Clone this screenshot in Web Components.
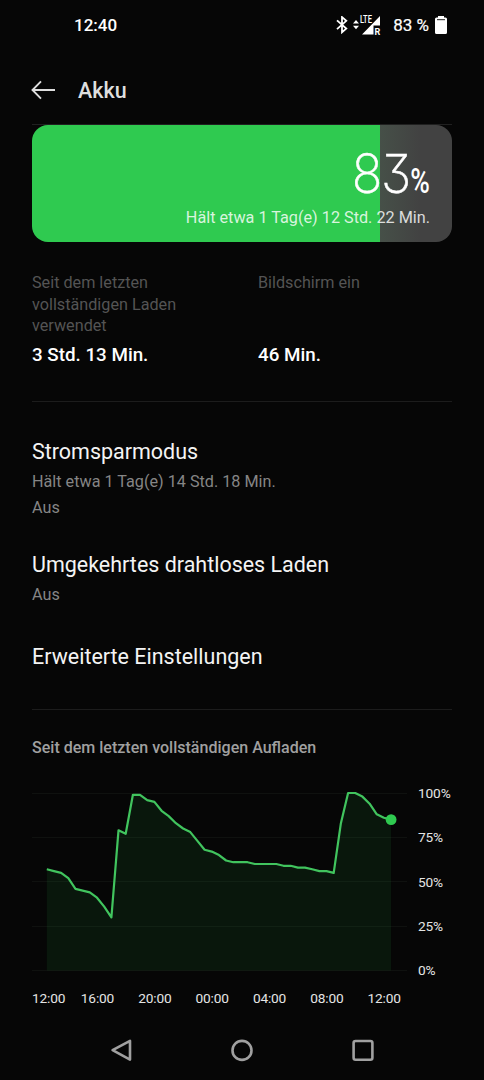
<!DOCTYPE html>
<html lang="de">
<head>
<meta charset="utf-8">
<title>Akku</title>
<style>
html,body{margin:0;background:#060606}
body{width:484px;height:1080px;overflow:hidden;font-family:Roboto,sans-serif;color:#fff}
</style>
</head>
<body>
<battery-screen></battery-screen>
<script>
function define(name, html, setup) {
  const template = document.createElement('template');
  template.innerHTML = html;
  customElements.define(name, class extends HTMLElement {
    constructor() {
      super();
      this.attachShadow({ mode: 'open' }).append(template.content.cloneNode(true));
    }
    connectedCallback() { if (setup) setup(this, this.shadowRoot); }
  });
}

define('status-bar', `
<style>
:host{display:flex;height:50px;box-sizing:border-box;padding:0 36px 0 74px;align-items:center;font-size:17px;font-weight:500;line-height:20px}
.time{flex:1}
svg{display:block;flex:none}
.bt{margin-right:5px}
.pct{margin:0 5px 0 12px;white-space:pre;font-weight:400;-webkit-text-stroke:.2px #fff}
</style>
<span class="time">12:40</span>
<svg class="bt" width="12" height="18" viewBox="0 0 12 18" fill="none" stroke="#fff" stroke-width="1.8"><path d="M1 4.300 10.300 12.600 6 16.300V1.100L10.300 4.800 1 13.100"/></svg>
<svg width="28" height="22" viewBox="0 0 28 22"><path d="M0 9.600 3 6.100 6 9.600zM0 11.700 3 15.200 6 11.700z" fill="#fff"/><path d="M27 2V11.5H20.5V20.5H9z" fill="#fff"/><text x="6.900" y="9" font-family="Roboto" font-size="10" font-weight="500" textLength="12" lengthAdjust="spacingAndGlyphs" fill="#fff" stroke="#060606" stroke-width=".8" paint-order="stroke">LTE</text><text x="21.6" y="20.5" font-family="Roboto" font-size="9" font-weight="700" fill="#fff">R</text></svg>
<span class="pct">83 %</span>
<svg width="14" height="20" viewBox="0 0 14 20"><path d="M4 1h6v1.500h1.5q1.5 0 1.500 1.500V17.500q0 1.500-1.500 1.500h-9Q1 19 1 17.500V4Q1 2.500 2.500 2.500H4z" fill="#fff"/><path d="M3 4.700h8" stroke="#222" stroke-width="1"/></svg>
`);

define('app-bar', `
<style>
:host{display:flex;height:73px;box-sizing:border-box;padding:6px 0 0 31px;align-items:flex-start;color:#dedede}
svg{display:block;margin:24px 23px 0 0}
h1{margin:22px 0 0;font-size:21.500px;font-weight:500;line-height:25px}
</style>
<svg width="24" height="20" viewBox="0 0 24 20" fill="none" stroke="#dedede" stroke-width="1.900"><path d="M24 10H1.500M10 1.300 1.500 10 10 18.700"/></svg>
<h1><slot></slot></h1>
`);

define('charge-card', `
<style>
:host{display:block;border-top:1px solid #202020;margin-top:1px}
.card{height:117px;box-sizing:border-box;border-radius:16px;background:linear-gradient(90deg,#2fca50 0 348px,#465048 348px,#424242 388px);padding:0 22px 0 0;display:flex;flex-direction:column;align-items:flex-end}
.value{display:flex;align-items:baseline;height:79px;line-height:97px}
.num{font-family:Inter,sans-serif;font-size:54px;font-weight:200;font-feature-settings:"cv09";-webkit-text-stroke:.5px #fff;display:block;transform:scaleX(.94);transform-origin:right;letter-spacing:-1.500px}
.pct{font-size:35px;font-weight:500;display:block;transform:scaleX(.76);transform-origin:right;margin-left:-6px}
.rest{font-size:16.230px;line-height:20px;color:rgba(255,255,255,.82);margin-top:4px;white-space:nowrap}
</style>
<div class="card"><div class="value"><span class="num">83</span><span class="pct">%</span></div><div class="rest"><slot></slot></div></div>
`);

define('usage-stat', `
<style>
:host{display:flex;flex-direction:column;justify-content:space-between;height:94px}
.label{font-size:16.200px;line-height:21.700px;color:#545454;max-width:170px}
.value{font-size:18.800px;line-height:22px;font-weight:500;color:#fff}
</style>
<div class="label"><slot name="label"></slot></div><div class="value"><slot></slot></div>
`);

define('usage-stats', `
<style>:host{display:grid;grid-template-columns:226px 1fr;padding:30px 0 35px;border-bottom:1px solid #1c1c1c}</style>
<slot></slot>
`);

define('setting-item', `
<style>
:host{display:block}
h2{margin:0;font-size:21.480px;line-height:26px;font-weight:400;color:#f4f4f4}
.sub{font-size:16.200px;line-height:26px;color:#858585;margin-top:4px}
::slotted(div){display:block}
</style>
<h2><slot name="title"></slot></h2><div class="sub"><slot></slot></div>
`);

define('settings-list', `
<style>
:host{display:flex;flex-direction:column;height:308px;box-sizing:border-box;padding-top:37px;gap:31px;border-bottom:1px solid #1c1c1c}
::slotted(:last-child){margin-top:5px}
</style>
<slot></slot>
`);

define('battery-chart', `
<style>
:host{display:block;padding-top:28px}
h3{margin:0 0 22px;font-size:16.050px;line-height:20px;font-weight:500;color:#a0a0a0}
.plot{display:flex;height:199px;width:435px}
svg{display:block;width:375px;height:199px;flex:none}
.scale{display:flex;flex-direction:column;justify-content:space-between;height:198px;margin-left:11px;font-size:13.700px;letter-spacing:-.15px;line-height:16px;color:#e4e4e4;padding-top:5px;box-sizing:border-box}
.hours{display:flex;gap:24.100px;font-size:13.700px;letter-spacing:-.17px;line-height:16px;color:#e4e4e4;margin-top:11px}
.hours span:first-child{margin-right:-8.500px}
</style>
<h3><slot></slot></h3>
<div class="plot">
<svg viewBox="0 0 375 199"><g class="grid" stroke="#0f110f"></g><path class="area" fill="#2fca50" fill-opacity=".09"/><path class="line" fill="none" stroke="#41c45e" stroke-width="2.200" stroke-linejoin="round"/><circle class="now" r="5.400" fill="#2fca50"/></svg>
<div class="scale"><span>100%</span><span>75%</span><span>50%</span><span>25%</span><span>0%</span></div>
</div>
<div class="hours"><span>12:00</span><span>16:00</span><span>20:00</span><span>00:00</span><span>04:00</span><span>08:00</span><span>12:00</span></div>
`, (host, root) => {
  // One charge level per half hour, in percent.
  const levels = [57,56,55,52,46,45,44,41,36,30,79,77,99,99,96,95,90,87,83,80,78,73,68,67,65,62,61,61,61,60,60,60,60,59,59,58,58,57,56,56,55,83,100,100,98,94,88,86,85];
  const x = i => 14.8 + i * 344.3 / 48, y = v => 190.5 - v * 1.775;
  const points = levels.map((v, i) => x(i).toFixed(1) + ' ' + y(v).toFixed(1)).join('L');
  root.querySelector('.line').setAttribute('d', 'M' + points);
  root.querySelector('.area').setAttribute('d', `M${x(0)} ${y(0)}L${points}L${x(48)} ${y(0)}Z`);
  root.querySelector('.grid').innerHTML = [0, 25, 50, 75, 100].map(v => `<path d="M0 ${Math.floor(y(v)) + .5}H375"/>`).join('');
  const dot = root.querySelector('.now');
  dot.setAttribute('cx', x(48));
  dot.setAttribute('cy', y(85));
});

define('nav-bar', `
<style>
:host{display:flex;height:60px;justify-content:center;align-items:center;gap:97px}
svg{display:block}
</style>
<svg width="24" height="24" viewBox="0 0 24 24" fill="none" stroke="#a0a0a0" stroke-width="2.600" stroke-linejoin="round"><path d="M21 2.800V21.600L3.600 12.200z"/></svg>
<svg width="24" height="24" viewBox="0 0 24 24" fill="none" stroke="#a0a0a0" stroke-width="2.600"><circle cx="12" cy="12.400" r="9.500"/></svg>
<svg width="24" height="24" viewBox="0 0 24 24" fill="none" stroke="#a0a0a0" stroke-width="2.600"><rect x="2.600" y="3" width="18.800" height="18.800" rx="2"/></svg>
`);

define('battery-screen', `
<style>
:host{display:flex;flex-direction:column;width:484px;height:1080px}
main{flex:1;padding:0 32px}
</style>
<status-bar></status-bar>
<app-bar>Akku</app-bar>
<main>
<charge-card>Hält etwa 1 Tag(e) 12 Std. 22 Min.</charge-card>
<usage-stats>
<usage-stat><span slot="label">Seit dem letzten vollständigen Laden verwendet</span>3 Std. 13 Min.</usage-stat>
<usage-stat><span slot="label">Bildschirm ein</span>46 Min.</usage-stat>
</usage-stats>
<settings-list>
<setting-item><span slot="title">Stromsparmodus</span><div>Hält etwa 1 Tag(e) 14 Std. 18 Min.</div><div>Aus</div></setting-item>
<setting-item><span slot="title">Umgekehrtes drahtloses Laden</span><div>Aus</div></setting-item>
<setting-item><span slot="title">Erweiterte Einstellungen</span></setting-item>
</settings-list>
<battery-chart>Seit dem letzten vollständigen Aufladen</battery-chart>
</main>
<nav-bar></nav-bar>
`);
</script>
</body>
</html>
